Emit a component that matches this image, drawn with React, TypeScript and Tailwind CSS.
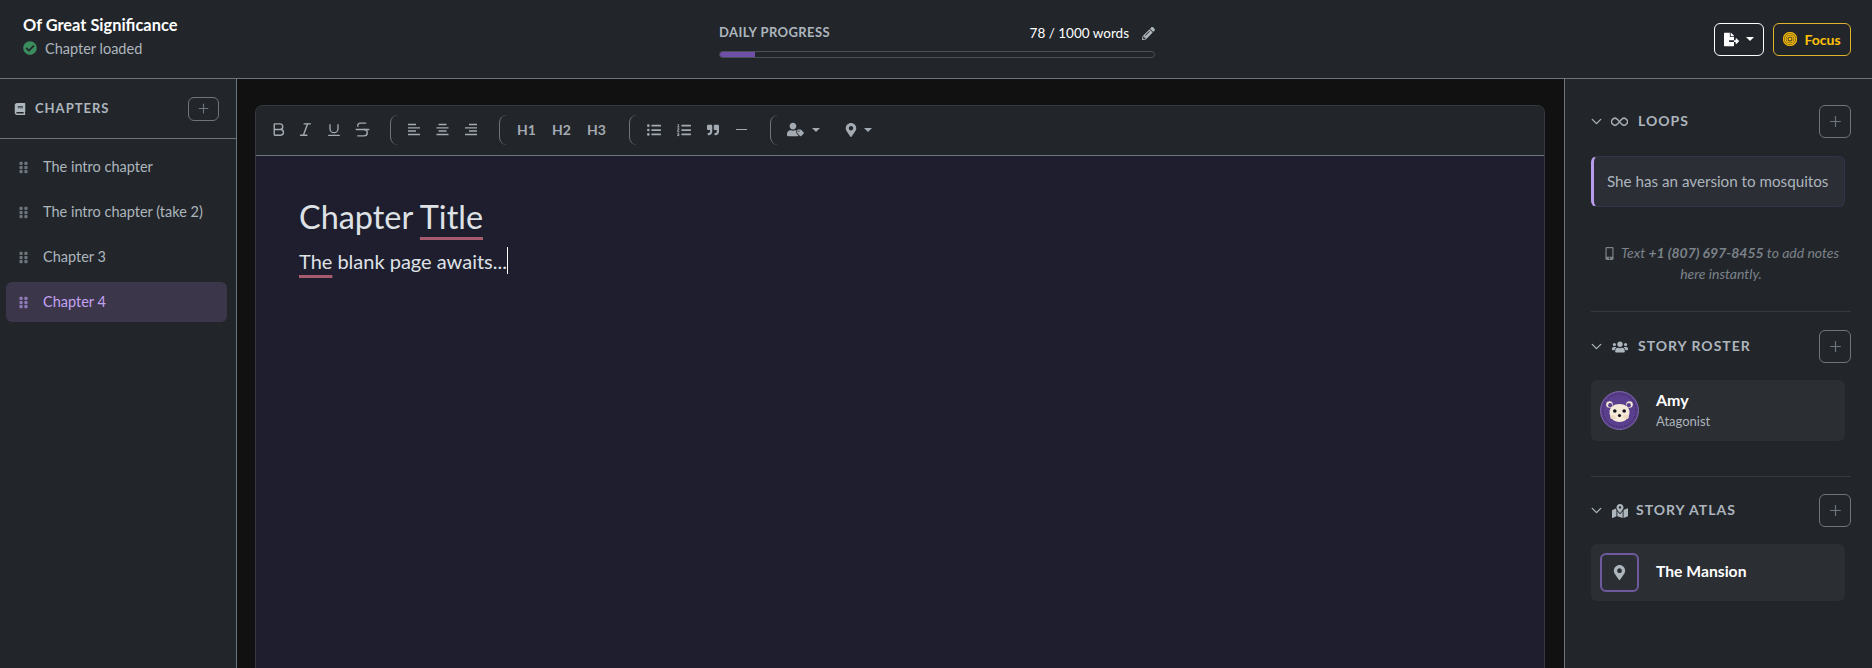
import React from "react";
import { Bold, Italic, Underline, Strikethrough, ChevronDown, Plus } from "lucide-react";
import {
  FaBook, FaCheckCircle, FaFileExport, FaGripVertical, FaListOl, FaListUl,
  FaMapMarkedAlt, FaMapMarkerAlt, FaMobileAlt, FaPencilAlt, FaQuoteRight, FaUserTag, FaUsers,
} from "react-icons/fa";
import { BsBullseye, BsInfinity } from "react-icons/bs";

function AlignIcon({ kind }: { kind: "l" | "c" | "r" }) {
  return (
    <svg width="13" height="13" viewBox="0 0 13 13" stroke="currentColor" strokeWidth="1.3">
      {[
        [1.5, 8],
        [4.8, 12],
        [8, 8],
        [11.5, 12],
      ].map(([y, w], i) => {
        const x = kind === "l" ? 0 : kind === "c" ? (13 - w) / 2 : 13 - w;
        return <line key={i} x1={x} x2={x + w} y1={y} y2={y} />;
      })}
    </svg>
  );
}

function Caret() {
  return <span className="inline-block w-0 h-0 border-t-[4px] border-x-[4px] border-x-transparent border-t-current" />;
}

function Group({ ml, children }: { ml: string; children: React.ReactNode }) {
  return <div className={`${ml} flex items-center h-[30px] pl-[9px] border-l border-[#6c757d] rounded-l-lg`}>{children}</div>;
}

function Tool({ w, children }: { w: string; children: React.ReactNode }) {
  return <button className={`${w} h-[30px] flex items-center justify-center text-[#a3aab1]`}>{children}</button>;
}

function PlusBtn() {
  return (
    <button className="w-[32px] h-[33px] flex items-center justify-center rounded-md border border-[#6c757d] text-[#6c757d]">
      <Plus size={17} strokeWidth={1.7} />
    </button>
  );
}

function AddBtnSmall() {
  return (
    <button className="w-[31px] h-[24px] flex items-center justify-center rounded-md border border-[#6c757d] text-[#6c757d]">
      <Plus size={15} strokeWidth={1.7} />
    </button>
  );
}

function SectionHead({ icon, label, gap }: { icon: React.ReactNode; label: string; gap: string }) {
  return (
    <div className="flex items-center justify-between">
      <div className="flex items-center text-[#adb5bd]">
        <ChevronDown size={17} strokeWidth={1.8} className="-ml-[3px]" />
        <span className="ml-[6px] w-[17px] flex justify-center">{icon}</span>
        <span className={`${gap} mb-[2px] text-[14px] font-bold tracking-[1px] uppercase`}>{label}</span>
      </div>
      <PlusBtn />
    </div>
  );
}

function Avatar() {
  return (
    <svg width="39" height="39" viewBox="0 0 39 39">
      <circle cx="19.5" cy="19.5" r="19" fill="#5a3f8e" stroke="#7d65a8" strokeWidth="1" />
      <circle cx="19.5" cy="19.5" r="16.5" fill="none" stroke="#2e2145" strokeWidth="1" strokeDasharray="1.2 1.6" />
      <circle cx="9.5" cy="13.5" r="3.3" fill="#f2e6d4" />
      <circle cx="29.5" cy="13.5" r="3.3" fill="#f2e6d4" />
      <circle cx="10.2" cy="14.2" r="2.1" fill="#5a3f8e" />
      <circle cx="28.8" cy="14.2" r="2.1" fill="#5a3f8e" />
      <path d="M9.500 21c0-5 4.500-8 10-8s10 3 10 8c0 6-4.500 10-10 10s-10-4-10-10z" fill="#f5ead9" />
      <ellipse cx="13" cy="26" rx="2.800" ry="2" fill="#eed9c4" />
      <ellipse cx="26" cy="26" rx="2.800" ry="2" fill="#eed9c4" />
      <circle cx="14.800" cy="20" r="1.800" fill="#15121c" />
      <circle cx="24.200" cy="20" r="1.800" fill="#15121c" />
      <circle cx="19.500" cy="24.500" r="1.600" fill="#15121c" />
    </svg>
  );
}

const chapters = ["The intro chapter", "The intro chapter (take 2)", "Chapter 3", "Chapter 4"];
const font = { fontFamily: '"Lato", "Noto Sans", sans-serif' };

export default function App() {
  return (
    <div style={font} className="h-[668px] w-[1872px] overflow-hidden flex flex-col bg-[#22262b] text-white">
      <header className="h-[79px] shrink-0 flex items-center px-[21px] border-b border-[#6c757d] bg-[#22262b]">
        <div className="flex-1 pl-[2px] pb-[7px]">
          <div className="text-[16.400px] leading-[24px] font-bold text-white">Of Great Significance</div>
          <div className="flex items-center gap-[8px] mt-[1px] text-[14.500px] leading-[21px] text-[#adb5bd]">
            <FaCheckCircle size={14} className="text-[#3c8d5e]" />
            <span>Chapter loaded</span>
          </div>
        </div>
        <div className="w-[436px] shrink-0 pt-[2px]">
          <div className="flex items-center justify-between h-[22px]">
            <span className="text-[13px] font-bold tracking-[0.4px] uppercase text-[#adb5bd]">Daily Progress</span>
            <span className="flex items-center gap-[13px] text-[13.500px] text-white">
              78 / 1000 words
              <FaPencilAlt size={13} className="text-[#adb5bd]" />
            </span>
          </div>
          <div className="mt-[7px] h-[7px] rounded-full border border-[#495057] overflow-hidden">
            <div className="h-full w-[8%] bg-[#6f4fa8]" />
          </div>
        </div>
        <div className="flex-1 flex justify-end gap-[9px]">
          <button className="w-[50px] h-[33px] flex items-center justify-center gap-[7px] rounded-md border border-white text-white">
            <FaFileExport size={15} />
            <Caret />
          </button>
          <button className="w-[78px] h-[33px] flex items-center justify-center gap-[7px] rounded-md border border-[#e0b32c] text-[#ffc107] text-[14px] font-bold">
            <BsBullseye size={14} stroke="currentColor" strokeWidth={0.5} />
            Focus
          </button>
        </div>
      </header>

      <div className="flex-1 min-h-0 flex">
        <aside className="w-[237px] shrink-0 border-r border-[#6c757d] bg-[#22262b]">
          <div className="h-[60px] flex items-center justify-between pl-[14px] pr-[17px] border-b border-[#6c757d]">
            <div className="flex items-center gap-[9px] text-[#adb5bd]">
              <FaBook size={12} />
              <span className="text-[13px] font-bold tracking-[1px] uppercase">Chapters</span>
            </div>
            <AddBtnSmall />
          </div>
          <div className="pt-[8px] pl-[6px] pr-[9px] flex flex-col gap-[5px]">
            {chapters.map((c, i) => (
              <div
                key={c}
                className={`h-[40px] flex items-center pl-[11px] gap-[13px] rounded-md text-[14.500px] ${
                  i === 3 ? "bg-[#3b364a] text-[#c4a3f5]" : "text-[#adb5bd]"
                }`}
              >
                <FaGripVertical size={13} className={i === 3 ? "text-[#8f7bb8]" : "text-[#6c757d]"} />
                <span>{c}</span>
              </div>
            ))}
          </div>
        </aside>

        <main className="flex-1 min-w-0 bg-[#111111] pt-[26px] pl-[18px] pr-[19px]">
          <div className="h-full flex flex-col rounded-t-lg border-x border-t border-[#343a40] overflow-hidden">
            <div className="h-[50px] shrink-0 flex items-center pl-[9px] pb-[2px] bg-[#22262b] border-b border-[#6c757d]">
              <Tool w="w-[27px]"><Bold size={17} strokeWidth={2} /></Tool>
              <Tool w="w-[27px]"><Italic size={17} strokeWidth={2} /></Tool>
              <Tool w="w-[29px]"><Underline size={16} strokeWidth={2} /></Tool>
              <Tool w="w-[29px]"><Strikethrough size={19} strokeWidth={1.7} /></Tool>
              <Group ml="ml-[13px]">
                <Tool w="w-[28px]"><AlignIcon kind="l" /></Tool>
                <Tool w="w-[28px]"><AlignIcon kind="c" /></Tool>
                <Tool w="w-[28px]"><AlignIcon kind="r" /></Tool>
              </Group>
              <Group ml="ml-[15px]">
                <Tool w="w-[35px]"><span className="text-[14px] font-bold">H1</span></Tool>
                <Tool w="w-[35px]"><span className="text-[14px] font-bold">H2</span></Tool>
                <Tool w="w-[35px]"><span className="text-[14px] font-bold">H3</span></Tool>
              </Group>
              <Group ml="ml-[15px]">
                <Tool w="w-[30px]"><FaListUl size={14} /></Tool>
                <Tool w="w-[29px]"><FaListOl size={14} /></Tool>
                <Tool w="w-[29px]"><FaQuoteRight size={12} /></Tool>
                <Tool w="w-[29px]"><span className="w-[11px] h-[1.500px] bg-[#a3aab1]" /></Tool>
              </Group>
              <Group ml="ml-[14px]">
                <button className="w-[55px] h-[30px] flex items-center pl-[7px] gap-[8px] text-[#a3aab1]">
                  <FaUserTag size={17} />
                  <Caret />
                </button>
                <button className="w-[40px] h-[30px] flex items-center pl-[9px] gap-[6px] text-[#a3aab1]">
                  <FaMapMarkerAlt size={14} />
                  <Caret />
                </button>
              </Group>
            </div>
            <div className="flex-1 bg-[#1e1e2e] pl-[43px] pt-[39px]">
              <h1 className="text-[32.400px] leading-[44px] font-normal text-[#dee2e6]">
                Chapter{" "}
                <span className="underline decoration-[#a85a6e] decoration-[3px] underline-offset-[8px]">Title</span>
              </h1>
              <p className="mt-[8px] flex text-[20px] leading-[28px] text-[#dee2e6]">
                <span className="underline decoration-[#a85a6e] decoration-[3px] underline-offset-[6px]">The</span>
                <span className="ml-[5px]">blank page awaits...</span>
                <span className="inline-block w-px h-[27px] bg-white" />
              </p>
            </div>
          </div>
        </main>

        <aside className="w-[308px] shrink-0 border-l border-[#6c757d] bg-[#22262b] pl-[26px] pr-[21px] pt-[26px]">
          <SectionHead icon={<BsInfinity size={20} stroke="currentColor" strokeWidth={0.4} />} label="Loops" gap="ml-[10px]" />
          <div className="mt-[18px] w-[254px] h-[51px] flex items-center pl-[13px] rounded-md bg-[#2b2e35] border border-[#33344a] border-l-[3px] border-l-[#b79ceb] text-[15.200px] text-[#adb5bd]">
            She has an aversion to mosquitos
          </div>
          <div className="mt-[35px] text-center text-[14px] leading-[21px] italic text-[#7b8289]">
            <FaMobileAlt size={13} className="inline-block mr-[5px] align-[-2px]" />
            Text <b>+1 (807) 697-8455</b> to add notes
            <br />
            here instantly.
          </div>
          <div className="mt-[27px] h-px bg-[#343a40]" />
          <div className="mt-[18px]">
            <SectionHead icon={<FaUsers size={16} />} label="Story Roster" gap="ml-[10px]" />
          </div>
          <div className="mt-[17px] w-[254px] h-[61px] flex items-center pl-[9px] gap-[17px] rounded-md bg-[#2b2e33]">
            <Avatar />
            <div className="mb-[2px]">
              <div className="text-[16px] leading-[22px] font-bold text-white">Amy</div>
              <div className="text-[13px] leading-[20px] text-[#adb5bd]">Atagonist</div>
            </div>
          </div>
          <div className="mt-[35px] h-px bg-[#343a40]" />
          <div className="mt-[17px]">
            <SectionHead icon={<FaMapMarkedAlt size={16} />} label="Story Atlas" gap="ml-[8px]" />
          </div>
          <div className="mt-[17px] w-[254px] h-[57px] flex items-center pl-[9px] gap-[17px] rounded-md bg-[#2b2e33]">
            <div className="w-[39px] h-[39px] flex items-center justify-center rounded-md border-2 border-[#6f5a9e] text-[#adb5bd]">
              <FaMapMarkerAlt size={15} />
            </div>
            <div className="mb-[2px] text-[15.700px] font-bold text-white">The Mansion</div>
          </div>
        </aside>
      </div>
    </div>
  );
}
